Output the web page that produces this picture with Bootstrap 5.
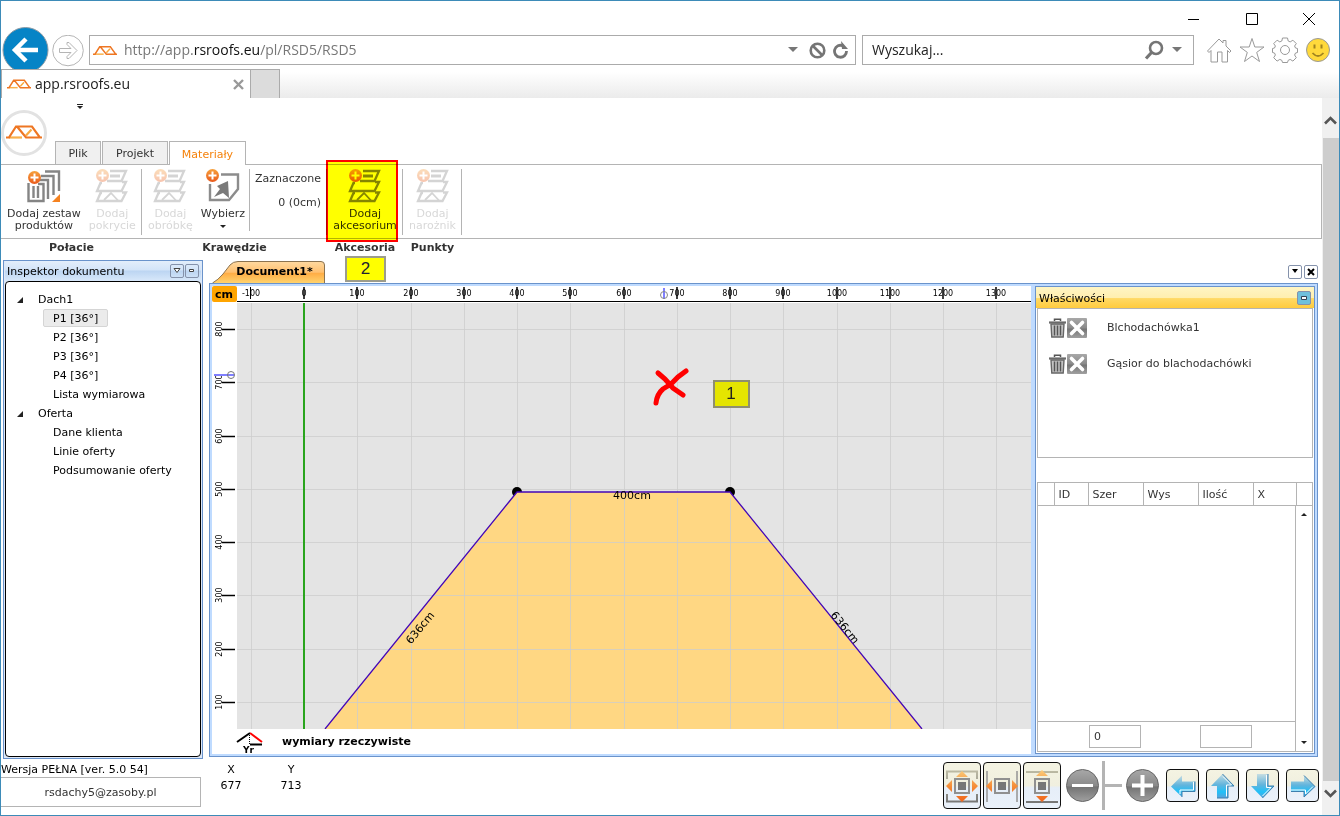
<!DOCTYPE html>
<html lang="pl">
<head>
<meta charset="utf-8">
<meta name="viewport" content="width=device-width, initial-scale=1">
<title>app.rsroofs.eu</title>
<link href="https://cdn.jsdelivr.net/npm/bootstrap@5.3.0/dist/css/bootstrap.min.css" rel="stylesheet">
<style>
  :root { --line: #b4b4b4; --frame: #6a93cb; --pale: #bfdbff; }
  body { font-family: "DejaVu Sans", sans-serif; font-size: 11px; line-height: 12px; color: #000; background: #fff; }
  button { font: inherit; color: inherit; background: none; border: 0; padding: 0; }
  svg { display: block; flex: none; }
  .window { min-height: 100vh; border: 1px solid #3d8bb8; }
  .chrome { font-family: "Open Sans", "Noto Sans", sans-serif; font-size: 14px; line-height: 20px; }
  .titlebar { height: 26px; gap: 43px; padding: 11px 23px 0 0; }
  .navrow { height: 42px; padding-left: 1px; }
  .boxed { border: 1px solid #ababab; height: 30px; margin-top: 8px; }
  .address { color: #777; padding: 0 6px 0 3px; gap: 7px; margin-left: 2px; }
  .address b { color: #111; font-weight: 400; }
  .finder { width: 332px; margin-left: 6px; padding: 0 11px 0 9px; }
  .finder input { border: 0; outline: 0; min-width: 0; color: #222; padding: 0; }
  .finder input::placeholder { color: #222; opacity: 1; }
  .tools { margin: 10px 8px 0 12px; gap: 7px; }
  .tabstrip { height: 29px; background: linear-gradient(#fff 10%, #ebebeb); }
  .pagetab { width: 250px; background: #fff; border: 1px solid #ababab; border-bottom: 0; padding: 0 6px 0 5px; color: #222; gap: 4px; }
  .newtab { width: 29px; background: #dcdcdc; border: 1px solid #ababab; border-width: 1px 1px 0 0; }
  .scroller { width: 17px; background: #f0f0f0; }
  .thumb { background: #cdcdcd; margin: 12px 0 0 1px; }
  .apphead { height: 66px; }
  .logo { width: 54px; padding-top: 12px; }
  .custom { margin: 6px 0 0 22px; }
  .rtab { height: 23px; background: #f0f0f0; border: 1px solid var(--line); border-bottom: 0; color: #333; padding-top: 2px; }
  .rtab.on { background: #fff; color: #f5820b; height: 24px; margin-bottom: -1px; position: relative; }
  .t1 { width: 46px; } .t2 { width: 66px; } .t3 { width: 77px; }
  .ribbon { border: 1px solid var(--line); border-left: 0; height: 75px; color: #333; }
  .grp { position: relative; padding-top: 4px; }
  .grp::after { content: ""; position: absolute; right: 0; top: 4px; height: 66px; width: 1px; background: var(--line); }
  .g1 { width: 141px; } .g2 { width: 185px; } .g3 { width: 76px; } .g4 { width: 59px; }
  .cmd { display: flex; flex-direction: column; align-items: center; white-space: nowrap; gap: 5px; }
  .cmd:disabled { color: #d8d8d8; }
  .cmd:disabled svg { opacity: .35; }
  .pair { gap: 8px; padding-left: 6px; }
  .g2inner { width: 108px; border-right: 1px solid var(--line); height: 62px; }
  .picked { line-height: 24px; padding-right: 6px; margin-top: -2px; }
  .grplabels { font-weight: 700; height: 21px; padding-top: 3px; color: #333; text-align: center; }
  .hilite { position: absolute; left: -1px; top: -5px; width: 72px; height: 82px; background: #ff0; border: 2px solid #f00; mix-blend-mode: multiply; pointer-events: none; }
  .note2 { position: absolute; left: 18px; top: 91px; width: 41px; height: 26px; z-index: 3; background: #ff0; border: 2px solid #9c9c8c; font: 17px/22px "Liberation Sans", sans-serif; text-align: center; color: #223; }
  .inspector { width: 200px; margin: 0 6px 0 2px; border: 1px solid var(--frame); background: #dde8f8; padding: 0 1px 1px; }
  .inspector header { height: 20px; padding: 0 2px; background: linear-gradient(#e3eefb, #d3e4f8 45%, #bcd5f2 50%, #d8e8fa); gap: 1px; }
  .inspector header span, .props header span { padding-top: 2px; }
  .mini { width: 14px; height: 14px; border: 1px solid #8592ab; border-radius: 2px; display: flex; align-items: center; justify-content: center; }
  .mini.aqua { background: #6fc0dc; }
  .tree { background: #fff; border: 1px solid #000; border-radius: 4px; padding: 8px 0 0; }
  .tree ul { list-style: none; margin: 0; padding: 0; }
  .tree .row1 { height: 19px; display: flex; align-items: center; padding-left: 11px; gap: 15px; }
  .tree ul ul { padding-left: 37px; }
  .tree li li { height: 19px; display: flex; }
  .tree a { color: #000; text-decoration: none; padding: 3px 9px 1px; border: 1px solid transparent; border-radius: 2px; height: 18px; }
  .tree a.on { background: #ebebeb; border-color: #d5d5d5; }
  .tabline { height: 23px; gap: 2px; padding-left: 3px; }
  .doctab { position: relative; width: 114px; height: 23px; font-weight: 700; padding-left: 11px; }
  .doctab svg { position: absolute; left: 0; top: 0; }
  .doctab span { position: relative; }
  .doc { background: var(--pale); border: 1px solid var(--frame); padding: 2px 2px; margin-bottom: 2px; }
  .board { background: #fff; }
  #plan { width: 100%; height: 443px; }
  .caption { height: 25px; font-weight: 700; gap: 18px; padding-left: 24px; }
  .props { width: 280px; margin-left: 4px; border: 1px solid var(--frame); background: #fff; }
  .props header { height: 21px; background: linear-gradient(#fff5c4, #ffefb0 50%, #ffd966 55%, #ffcb3e); padding: 0 3px; }
  .plist { border: 1px solid var(--line); height: 150px; margin: 0 1px; color: #333; padding: 1px 0 0 10px; }
  .pitem { height: 36px; }
  .gridbox { border: 1px solid var(--line); margin: 24px 1px 1px; color: #333; }
  .gridbox table { width: 100%; table-layout: fixed; border-bottom: 1px solid var(--line); }
  .gridbox th { font-weight: 400; height: 22px; padding: 2px 4px 0; border-right: 1px solid var(--line); }
  .gridbox th:last-child { border: 0; }
  .c16 { width: 16px; } .c34 { width: 34px; } .c55 { width: 55px; }
  .sums { height: 30px; border-top: 1px solid var(--line); padding-left: 51px; gap: 59px; }
  .sums input { width: 52px; height: 23px; border: 1px solid var(--line); padding: 0 4px; color: #333; }
  .gscroll { width: 17px; border-left: 1px solid var(--line); padding: 7px 0; }
  .status { height: 56px; padding-right: 3px; }
  .version { padding-top: 5px; }
  .account { width: 200px; height: 30px; border: 1px solid var(--line); border-left: 0; color: #333; text-align: center; margin-top: 1px; padding-top: 1px; }
  .xy { width: 60px; text-align: center; line-height: 16px; padding-top: 3px; }
  .viewtools { padding-top: 2px; gap: 2px; }
  .fit, .pan { border: 1px solid #111; border-radius: 4px; background: linear-gradient(#f4f3e2, #f0efdf 50%, #e6eef8 55%, #eaf1fa); }
  .fit { width: 38px; height: 47px; }
  .pan { width: 33px; height: 33px; }
  .zoomout { margin-left: 3px; }
  .zoombar { margin: 0 2px 0 1px; }
  .pans { gap: 7px; margin-left: 5px; }
</style>
</head>
<body>
<svg width="0" height="0" class="position-absolute" aria-hidden="true">
  <defs>
    <linearGradient id="or" x1="0" y1="0" x2="0" y2="1"><stop offset="0" stop-color="#f6a13c"/><stop offset="1" stop-color="#ea5a1c"/></linearGradient>
    <linearGradient id="gy" x1="0" y1="0" x2="0" y2="1"><stop offset="0" stop-color="#a8a8a8"/><stop offset=".5" stop-color="#8a8a8a"/><stop offset=".55" stop-color="#747474"/><stop offset="1" stop-color="#a0a0a0"/></linearGradient>
    <linearGradient id="up" x1="0" y1="0" x2="0" y2="1"><stop offset="0" stop-color="#c6dde2"/><stop offset=".45" stop-color="#62b4dc"/><stop offset=".75" stop-color="#1fc0f8"/><stop offset="1" stop-color="#5aa0d8"/></linearGradient>
    <linearGradient id="tb" x1="0" y1="0" x2="0" y2="1"><stop offset="0" stop-color="#ffd9a0"/><stop offset=".5" stop-color="#ffc070"/><stop offset=".55" stop-color="#ffad45"/><stop offset="1" stop-color="#ffd36e"/></linearGradient>
    <linearGradient id="fade" gradientUnits="userSpaceOnUse" x1="0" y1="8" x2="0" y2="40"><stop offset="0" stop-color="#bcbaa4"/><stop offset="1" stop-color="#757575"/></linearGradient>
    <linearGradient id="fo" gradientUnits="userSpaceOnUse" x1="0" y1="8" x2="0" y2="40"><stop offset="0" stop-color="#fbc877"/><stop offset=".5" stop-color="#f48a35"/><stop offset="1" stop-color="#f0641c"/></linearGradient>
    <symbol id="roof" viewBox="0 0 36 14"><path d="M3 12.500H16" stroke="#f9b04a" stroke-width="2.200"/><path d="M20 10.500 25.500 4.500" stroke="#f9a940" stroke-width="2.200"/><path d="M0 12.500H3L10 1.500H26L34 12.500H20L11 1.500M34 12.500H36" fill="none" stroke="#ee7623" stroke-width="2.200"/></symbol>
    <symbol id="plus" viewBox="0 0 13 13"><circle cx="6.500" cy="6.500" r="6.500" fill="url(#or)"/><path d="M6.500 2.500v8M2.500 6.500h8" stroke="#fff" stroke-width="2"/></symbol>
    <symbol id="layers" viewBox="0 0 34 34">
      <g fill="none" stroke="#858585" stroke-width="2.300">
        <path d="M15 2H31L26.500 12H12"/><path d="M15 7H25" stroke-width="3"/>
        <path d="M7 14H5.500L2 22H26.500L31 13H27"/>
        <path d="M7 24H5.500L2 32H26.500L31 23.500H27"/>
        <path d="M9 31 16 24 23 31.500" stroke-width="1.800"/>
      </g>
      <use href="#plus" x="1" y="0" width="13" height="13"/>
    </symbol>
    <symbol id="bin" viewBox="0 0 18 20"><path d="M2.500 6h13l-.8 13H3.300z" fill="#c4c4c4" stroke="#666" stroke-width="1.400"/><path d="M6 7.500v10M9 7.500v10M12 7.500v10" stroke="#555" stroke-width="1.500"/><path d="M.5 4.500h17" stroke="#6a6a6a" stroke-width="2.200"/><path d="M6 3V1.200h6V3" fill="none" stroke="#555" stroke-width="1.500"/></symbol>
    <symbol id="cross" viewBox="0 0 20 20"><rect width="20" height="20" rx="1" fill="url(#gy)"/><path d="m4.500 4.500 11 11m0-11-11 11" stroke="#fff" stroke-width="3.600" stroke-linecap="round"/></symbol>
  </defs>
</svg>

<div class="window d-flex flex-column">
  <div class="chrome">
    <div class="titlebar d-flex justify-content-end align-items-start">
      <button aria-label="Minimalizuj"><svg width="15" height="14"><path d="M2 7.500h11" stroke="#000"/></svg></button>
      <button aria-label="Maksymalizuj"><svg width="15" height="14"><path d="M2.500 1.500h11v11h-11z" fill="none" stroke="#000"/></svg></button>
      <button aria-label="Zamknij"><svg width="14" height="14"><path d="m1 1 12 12m0-12L1 13" stroke="#000"/></svg></button>
    </div>
    <div class="navrow d-flex align-items-start overflow-hidden">
      <button aria-label="Wstecz"><svg width="48" height="46"><circle cx="23.500" cy="23" r="22.500" fill="#0684c6" stroke="#8a9aa5"/><path d="M36 23H13M24 12 13 23l11 11" fill="none" stroke="#fff" stroke-width="4.500"/></svg></button>
      <button aria-label="Dalej" class="mt-2"><svg width="37" height="32"><circle cx="18" cy="15.500" r="15.300" fill="#fff" stroke="#b5b5b5"/><path d="M9.500 13.500H21l-4-4v-2h2l8 8-8 8h-2v-2l4-4H9.500z" fill="#fff" stroke="#b5b5b5"/></svg></button>
      <div class="boxed address d-flex align-items-center flex-grow-1">
        <svg width="24" height="11"><use href="#roof"/></svg>
        <div class="flex-grow-1" role="textbox" aria-label="Adres">http://app.<b>rsroofs.eu</b>/pl/RSD5/RSD5</div>
        <svg width="10" height="6"><path d="M0 0h10L5 5z" fill="#777"/></svg>
        <button aria-label="Zatrzymaj" class="ms-1"><svg width="17" height="17"><circle cx="8.500" cy="8.500" r="6.800" fill="none" stroke="#757575" stroke-width="2.600"/><path d="m4 4 9 9" stroke="#757575" stroke-width="2.600"/></svg></button>
        <button aria-label="Odśwież"><svg width="16" height="19"><path d="M10 4.800A6 6 0 1 0 13.500 10" fill="none" stroke="#757575" stroke-width="2.800"/><path d="M8 0l1 8h6z" fill="#757575"/></svg></button>
      </div>
      <div class="boxed finder d-flex align-items-center">
        <input class="flex-grow-1" type="text" aria-label="Wyszukaj" placeholder="Wyszukaj...">
        <svg width="20" height="20"><circle cx="12" cy="8" r="6" fill="none" stroke="#757575" stroke-width="2.600"/><path d="m8 12-6 6.500" stroke="#757575" stroke-width="3.200"/></svg>
        <svg width="10" height="6" class="ms-2"><path d="M0 0h10L5 5z" fill="#777"/></svg>
      </div>
      <div class="tools d-flex align-items-center">
        <svg width="26" height="26"><path d="M1.500 14 13 2l4 4V3.500h3V9l5 5-1.500 1.500-2-2V25H16V15h-4.500v10H5V13.500l-2 2z" fill="#fff" stroke="#999"/></svg>
        <svg width="26" height="26"><path d="m13 1.500 2.800 8.500H25l-7.300 5.400L20.500 24.500 13 19l-7.500 5.500 2.800-9.100L1 10h9.200z" fill="#fff" stroke="#999"/></svg>
        <svg width="26" height="26" viewBox="-13 -13 26 26"><path d="M-2.500-12h5l.7 3 2 .9 2.700-1.700 3.400 3.400L9.600-4l.9 2 2 .5v4l-2 .5-.9 2 1.700 2.700-3.400 3.400L5.200 9.400l-2 .9-.7 2.200h-5l-.7-2.200-2-.9-2.700 1.700-3.400-3.400L-9.600 5l-.9-2-2-.5v-4l2-.5.9-2-1.700-2.400 3.400-3.400 2.700 1.700 2-.9z" fill="#fff" stroke="#999"/><circle r="4.500" fill="#fff" stroke="#999"/></svg>
        <svg width="26" height="26"><circle cx="13" cy="13" r="11.500" fill="#ffd93b" stroke="#999"/><path d="M9.500 7.500v4m7-4v4" stroke="#a08420" stroke-width="2"/><path d="M7.500 16q5.500 6 11 0" fill="none" stroke="#a08420" stroke-width="1.800"/></svg>
      </div>
    </div>
    <div class="tabstrip d-flex">
      <div class="pagetab d-flex align-items-center"><svg width="24" height="10"><use href="#roof"/></svg><span class="flex-grow-1">app.rsroofs.eu</span><button aria-label="Zamknij kartę"><svg width="11" height="11"><path d="m1 1 9 9m0-9-9 9" stroke="#999" stroke-width="2.400"/></svg></button></div>
      <button class="newtab" aria-label="Nowa karta"></button>
    </div>
  </div>

  <div class="d-flex flex-grow-1">
    <main class="flex-grow-1 d-flex flex-column overflow-hidden">
      <div class="apphead d-flex">
        <div class="logo"><svg width="46" height="46"><circle cx="23" cy="23" r="21.500" fill="#fff" stroke="#e2e2e2" stroke-width="3"/><use href="#roof" x="5" y="15" width="36" height="14"/></svg></div>
        <div class="d-flex flex-column justify-content-between">
          <button class="custom align-self-start" aria-label="Dostosuj pasek"><svg width="6" height="5"><path d="M0 .5h6" stroke="#222"/><path d="M0 2h6L3 5z" fill="#222"/></svg></button>
          <div class="d-flex align-items-start" style="gap:1px">
            <button class="rtab t1">Plik</button>
            <button class="rtab t2">Projekt</button>
            <button class="rtab t3 on">Materiały</button>
          </div>
        </div>
      </div>
      <div class="ribbon d-flex">
        <div class="grp g1 pair d-flex align-items-start">
          <button class="cmd"><svg width="34" height="34"><path d="M18 2.500h14V22M14 7h12.500V26M12 11h9V30" fill="none" stroke="#858585" stroke-width="2.400"/><path d="M1.500 14v18h15V15H11M6.500 17v12M11 17v12" fill="none" stroke="#858585" stroke-width="2.400"/><path d="M33 25v8h-8z" fill="#f58220"/><use href="#plus" x="1" y="2" width="13" height="13"/></svg><span>Dodaj zestaw<br>produktów</span></button>
          <button class="cmd" disabled><svg width="34" height="34"><use href="#layers"/></svg><span>Dodaj<br>pokrycie</span></button>
        </div>
        <div class="grp g2 d-flex align-items-start">
          <div class="g2inner pair d-flex align-items-start">
            <button class="cmd" disabled><svg width="34" height="34"><use href="#layers"/></svg><span>Dodaj<br>obróbkę</span></button>
            <button class="cmd"><svg width="34" height="34"><path d="M15 5.500h17V20L23 31H4V15" fill="none" stroke="#8c8c8c" stroke-width="2.400"/><path d="M22 12 11 17l3 3-6 8 9-4 6 5z" fill="#7a7a7a"/><use href="#plus" x="0" y="0" width="13" height="13"/></svg><span>Wybierz</span><svg width="6" height="3"><path d="M0 0h6L3 3z" fill="#222"/></svg></button>
          </div>
          <div class="picked text-end flex-grow-1">Zaznaczone<br>0 (0cm)</div>
        </div>
        <div class="grp g3 d-flex justify-content-center">
          <button class="cmd"><svg width="34" height="34"><use href="#layers"/></svg><span>Dodaj<br>akcesorium</span></button>
          <div class="hilite"></div><div class="note2">2</div>
        </div>
        <div class="grp g4 d-flex justify-content-center">
          <button class="cmd" disabled><svg width="34" height="34"><use href="#layers"/></svg><span>Dodaj<br>narożnik</span></button>
        </div>
      </div>
      <div class="grplabels d-flex"><div class="g1">Połacie</div><div class="g2">Krawędzie</div><div class="g3">Akcesoria</div><div class="g4">Punkty</div></div>

      <div class="d-flex flex-grow-1 pe-1">
        <section class="inspector d-flex flex-column">
          <header class="d-flex align-items-center"><span class="flex-grow-1">Inspektor dokumentu</span>
            <button class="mini" aria-label="Opcje"><svg width="8" height="6"><path d="M1 .5h6L4 4.500z" fill="#fff" stroke="#444"/></svg></button>
            <button class="mini" aria-label="Zwiń"><svg width="6" height="4"><path d="M.5.5h4v2h-4z" fill="#fff" stroke="#444"/></svg></button></header>
          <nav class="tree flex-grow-1">
            <ul>
              <li><div class="row1"><svg width="6" height="6"><path d="M6 0v6H0z" fill="#222"/></svg>Dach1</div>
                <ul><li><a class="on" href="#">P1 [36°]</a></li><li><a href="#">P2 [36°]</a></li><li><a href="#">P3 [36°]</a></li><li><a href="#">P4 [36°]</a></li><li><a href="#">Lista wymiarowa</a></li></ul></li>
              <li><div class="row1"><svg width="6" height="6"><path d="M6 0v6H0z" fill="#222"/></svg>Oferta</div>
                <ul><li><a href="#">Dane klienta</a></li><li><a href="#">Linie oferty</a></li><li><a href="#">Podsumowanie oferty</a></li></ul></li>
            </ul>
          </nav>
        </section>

        <section class="flex-grow-1 d-flex flex-column overflow-hidden">
          <div class="tabline d-flex align-items-center">
            <button class="doctab"><svg width="114" height="23"><path d="M.5 23Q6 20 11 14L18 5Q21 1.500 26 1.500H109Q112.500 1.500 112.500 5V23" fill="url(#tb)" stroke="#8b7350"/></svg><span>Document1*</span></button>
            <button class="mini ms-auto" aria-label="Lista"><svg width="8" height="5"><path d="M1 0h6L4 4z"/></svg></button>
            <button class="mini" aria-label="Zamknij dokument"><svg width="8" height="8"><path d="m1 1 6 6m0-6-6 6" stroke="#000" stroke-width="2"/></svg></button>
          </div>
          <div class="doc d-flex flex-grow-1">
            <div class="board flex-grow-1 d-flex flex-column overflow-hidden">
              <svg id="plan" font-family="DejaVu Sans, sans-serif"></svg>
              <div class="caption d-flex align-items-center mt-auto"><svg width="28" height="25" font-family="DejaVu Sans, sans-serif" font-size="9" font-weight="700"><path d="M1 13 14 4" stroke="#000" stroke-width="2"/><path d="m14 4 12 9" stroke="#f00" stroke-width="2"/><path d="M13.500 4v12" stroke="#000" stroke-dasharray="1 1"/><path d="M14 15.500h12" stroke="#000" stroke-width="2"/><text x="7" y="24">Yr</text></svg><span>wymiary rzeczywiste</span></div>
            </div>
            <aside class="props d-flex flex-column">
              <header class="d-flex align-items-center justify-content-between"><span>Właściwości</span><button class="mini aqua" aria-label="Zwiń właściwości"><svg width="6" height="4"><path d="M.5.5h5v3h-5z" fill="#fff" stroke="#345"/></svg></button></header>
              <div class="plist">
                <div class="pitem d-flex align-items-center"><button aria-label="Usuń"><svg width="19" height="20"><use href="#bin"/></svg></button><button aria-label="Odznacz"><svg width="20" height="20"><use href="#cross"/></svg></button><span class="ms-3 ps-1">Blchodachówka1</span></div>
                <div class="pitem d-flex align-items-center"><button aria-label="Usuń"><svg width="19" height="20"><use href="#bin"/></svg></button><button aria-label="Odznacz"><svg width="20" height="20"><use href="#cross"/></svg></button><span class="ms-3 ps-1">Gąsior do blachodachówki</span></div>
              </div>
              <div class="gridbox flex-grow-1 d-flex flex-column">
                <table><colgroup><col class="c16"><col class="c34"><col class="c55"><col class="c55"><col class="c55"><col><col class="c16"></colgroup>
                  <thead><tr><th></th><th>ID</th><th>Szer</th><th>Wys</th><th>Ilość</th><th>X</th><th></th></tr></thead></table>
                <div class="d-flex flex-grow-1">
                  <div class="flex-grow-1 d-flex flex-column justify-content-end">
                    <div class="sums d-flex align-items-center"><input type="text" value="0" aria-label="Suma szerokości"><input type="text" aria-label="Suma ilości"></div>
                  </div>
                  <div class="gscroll d-flex flex-column justify-content-between align-items-center"><svg width="6" height="3"><path d="M0 3h6L3 0z" fill="#222"/></svg><svg width="6" height="3"><path d="M0 0h6L3 3z" fill="#222"/></svg></div>
                </div>
              </div>
            </aside>
          </div>
        </section>
      </div>

      <footer class="status d-flex align-items-start">
        <div class="version"><div>Wersja PEŁNA [ver. 5.0 54]</div><button class="account">rsdachy5@zasoby.pl</button></div>
        <div class="xy">X<br>677</div><div class="xy">Y<br>713</div>
        <div class="viewtools ms-auto d-flex align-items-center">
          <button class="fit" aria-label="Dopasuj"><svg width="36" height="45"><path d="M3 16V8.500H33V16M3 31v7.500H33V31" fill="none" stroke="url(#fade)" stroke-width="2"/><path d="M11 16h14v14H11z" fill="none" stroke="#909090" stroke-width="2"/><path d="M14 19h8v8h-8z" fill="#777"/><path d="m18 8 6 6H12zM18 39l6-6H12zM2 23l6-6v12zM34 23l-6-6v12z" fill="url(#fo)"/></svg></button>
          <button class="fit" aria-label="Dopasuj szerokość"><svg width="36" height="45"><path d="M3 8v31M33 8v31" stroke="#999" stroke-width="1.600"/><path d="M11 16h14v14H11z" fill="none" stroke="#909090" stroke-width="2"/><path d="M14 19h8v8h-8z" fill="#777"/><path d="m2 23 6-6v12zM34 23l-6-6v12z" fill="url(#fo)"/></svg></button>
          <button class="fit" aria-label="Dopasuj wysokość"><svg width="36" height="45"><path d="M2 8h32v2H2zM2 38h32v2H2z" fill="url(#fade)"/><path d="M11 16h14v14H11z" fill="none" stroke="#909090" stroke-width="2"/><path d="M14 19h8v8h-8z" fill="#777"/><path d="m18 7 6 6H12zM18 39l6-6H12z" fill="url(#fo)"/></svg></button>
          <button class="zoomout" aria-label="Pomniejsz"><svg width="33" height="33"><circle cx="16.500" cy="16.500" r="16" fill="url(#gy)" stroke="#666"/><path d="M6 16.500h21" stroke="#fff" stroke-width="3"/></svg></button>
          <svg width="20" height="49" class="zoombar"><path d="M1.500 0v49" stroke="#b4b4b4" stroke-width="3"/><path d="M3 24.500h17" stroke="#b4b4b4" stroke-width="3"/></svg>
          <button aria-label="Powiększ"><svg width="33" height="33"><circle cx="16.500" cy="16.500" r="16" fill="url(#gy)" stroke="#666"/><path d="M6 16.500h21M16.500 6v21" stroke="#fff" stroke-width="4"/></svg></button>
          <div class="pans d-flex">
            <button class="pan" aria-label="W lewo"><svg width="31" height="31"><path d="M28 11.500H15V5.500L4 16.500 15 27v-5.500H28z" fill="url(#up)"/><path d="M15 27v-5.500H28V11.500" fill="none" stroke="#3c7fae"/><path d="M26.500 12v8H13v4" fill="none" stroke="#fff"/></svg></button>
            <button class="pan" aria-label="W górę"><svg width="31" height="31"><path d="M10 28V16H4L15.500 4 27 16H21V28z" fill="url(#up)"/><path d="M15.500 4 27 16H21V28H10" fill="none" stroke="#3c7fae"/><path d="M16 6.500 24.500 15H19.500V26.500" fill="none" stroke="#fff"/></svg></button>
            <button class="pan" aria-label="W dół"><svg width="31" height="31"><path d="M10 4V16H4L15.500 28 27 16H21V4z" fill="url(#up)"/><path d="M15.500 28 27 16H21V4" fill="none" stroke="#3c7fae"/><path d="M19.500 5V17.500H24L15.500 26" fill="none" stroke="#fff"/></svg></button>
            <button class="pan" aria-label="W prawo"><svg width="31" height="31"><path d="M4 11.500H17V5.500L28 16.500 17 27v-5.500H4z" fill="url(#up)"/><path d="M17 5.500 28 16.500 17 27v-5.500H4" fill="none" stroke="#3c7fae"/><path d="M4 20H18.500V24L26 16.500" fill="none" stroke="#fff"/></svg></button>
          </div>
        </div>
      </footer>
    </main>
    <div class="scroller d-flex flex-column align-items-stretch">
      <svg width="17" height="12" class="mt-3"><path d="m3 9.500 5.500-5.500L14 9.500" fill="none" stroke="#555" stroke-width="2.600"/></svg>
      <div class="thumb flex-grow-1"></div>
      <svg width="17" height="34"><path d="m3 9.500 5.500 5.500L14 9.500" fill="none" stroke="#555" stroke-width="2.600"/></svg>
    </div>
  </div>
</div>

<script>
  // Plan: 100 cm are 53.25 px, the zero point lies 92 px from the left edge.
  const plan = document.getElementById('plan');
  const step = 53.25, X = u => Math.round(92 + u * step / 100), Y = u => Math.round(469 - u * step / 100);
  function draw() {
    const w = plan.parentElement.clientWidth, xs = [], ys = [800, 700, 600, 500, 400, 300, 200, 100];
    for (let u = -100; X(u) < w - 15; u += 100) xs.push(u);
    let s = `<rect x="25" y="17" width="${w}" height="426" fill="#e4e4e4"/>`;
    s += '<path d="M113 443 305 206H518L710 443z" fill="#ffd783"/>';
    for (const u of xs) s += `<path d="M${X(u) + .5} 17V443" stroke="#ccc" stroke-opacity=".75"/>`;
    for (const u of ys) s += `<path d="M25 ${Y(u) + .5}H${w}" stroke="#ccc" stroke-opacity=".75"/>`;
    s += `<path d="M92 17V443" stroke="#2aa51d" stroke-width="2"/><path d="M25 15.500H${w}" stroke="#000"/>`;
    for (const u of xs) s += `<path d="M${u < 0 ? X(u) - .5 : X(u)} 1V13" stroke="#000" stroke-width="${u < 0 ? 1 : 1.500}"/><text x="${X(u)}" y="10" font-size="8" text-anchor="middle">${u}</text>`;
    for (const u of ys) s += `<path d="M10 ${Y(u) + .5}H23" stroke="#000" stroke-width="1.500"/><text font-size="8" text-anchor="middle" transform="translate(10 ${Y(u)}) rotate(-90)">${u}</text>`;
    s += '<rect width="25" height="16" rx="2" fill="#ffa500"/><text x="12" y="12" font-size="11" font-weight="700" text-anchor="middle">cm</text>';
    s += '<path d="M452 2V13M2 89H22" stroke="#8080ff" stroke-width="2"/><circle cx="452" cy="9" r="3.500" fill="none" stroke="#888"/><circle cx="19" cy="89" r="3.500" fill="none" stroke="#777"/>';
    s += '<circle cx="305" cy="206" r="5"/><circle cx="518" cy="206" r="5"/><path d="M305 206H518L523 212H300z" fill="#ffd783"/>';
    s += '<path d="M113 443 305 206H518L710 443" fill="none" stroke="#4306b8" stroke-width="1.300"/>';
    s += '<g font-size="11" text-anchor="middle"><text x="420" y="213">400cm</text><text transform="translate(211 344) rotate(-51)">636cm</text><text transform="translate(630 344) rotate(51)">636cm</text></g>';
    s += '<path d="M446 87 453 93 461 102 471 109M474 85 466 91 459 98 451 103Q445 108 444 117" fill="none" stroke="#f00" stroke-width="5" stroke-linecap="round"/>';
    s += '<rect x="502" y="95" width="35" height="26" fill="#e5e500" stroke="#8e8e70" stroke-width="2"/><text x="519" y="113" font-family="Liberation Sans, sans-serif" font-size="17" text-anchor="middle" fill="#222">1</text>';
    plan.innerHTML = s;
  }
  draw();
  addEventListener('resize', draw);
</script>
<script src="https://cdn.jsdelivr.net/npm/bootstrap@5.3.0/dist/js/bootstrap.bundle.min.js"></script>
</body>
</html>
